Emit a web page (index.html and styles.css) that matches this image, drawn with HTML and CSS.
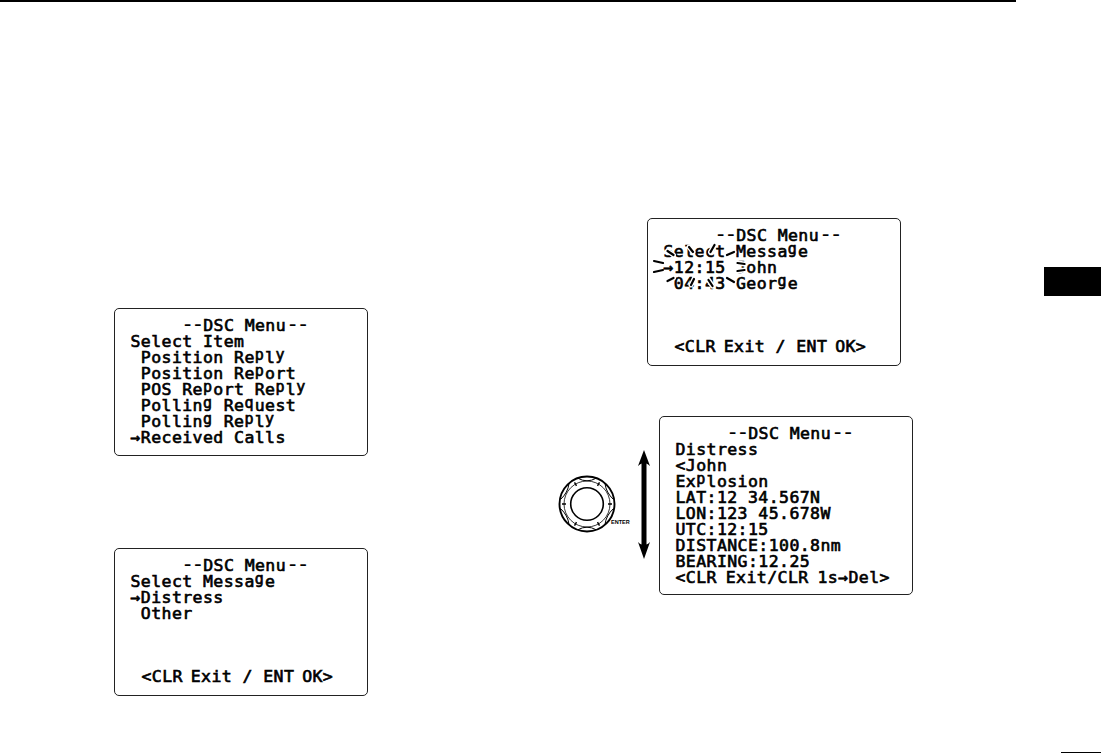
FILE: index.html
```html
<!DOCTYPE html>
<html lang="en">
  <head>
    <meta charset="UTF-8">
    <meta name="viewport" content="width=device-width, initial-scale=1.0">
    <title>DSC Menu</title>
    <link rel="stylesheet" href="styles.css">
  </head>
  <body>
    <div class="page">
      <div class="top-rule"></div>
      <div class="column left">
        <div class="lcd">
          <p class="title"><u>--</u>DSC Menu<u>--</u></p>
          <p>Select Item</p>
          <p> Position Re<i>p</i>l<i>y</i></p>
          <p> Position Re<i>p</i>ort</p>
          <p> POS Re<i>p</i>ort Re<i>p</i>l<i>y</i></p>
          <p> Pollin<i>g</i> Re<i>q</i>uest</p>
          <p> Pollin<i>g</i> Re<i>p</i>l<i>y</i></p>
          <p><b>→</b>Received Calls</p>
        </div>
        <div class="lcd">
          <p class="title"><u>--</u>DSC Menu<u>--</u></p>
          <p>Select Messa<i>g</i>e</p>
          <p><b>→</b>Distress</p>
          <p> Other</p>
          <p class="keys">&lt;CLR Exit<span> / </span>ENT OK&gt;</p>
        </div>
      </div>
      <div class="column right">
        <div class="lcd">
          <p class="title"><u>--</u>DSC Menu<u>--</u></p>
          <p>Select Messa<i>g</i>e</p>
          <p><b>→</b>12:15 John</p>
          <p> 04:43 Geor<i>g</i>e</p>
          <p class="keys">&lt;CLR Exit<span> / </span>ENT OK&gt;</p>
          <svg class="blink" width="100" height="52" viewBox="0 0 100 52">
            <path class="halo" d="M20.500 21l6 4M42 17l4 5M67.500 15l-4 7M80 25l7-3M90.500 33l7 1M90.500 41l7-1M20.500 51l6-3M44 55l3-6M61.500 50l4 6M80 48l7 4"/>
            <path class="rays" d="M7 31l9 2M7 42l9-2M20.500 21l6 4M42 17l4 5M67.500 15l-4 7M80 25l7-3M90.500 33l7 1M90.500 41l7-1M20.500 51l6-3M44 55l3-6M61.500 50l4 6M80 48l7 4"/>
          </svg>
        </div>
        <div class="scroll-row">
          <svg class="knob" width="74" height="60" viewBox="0 0 74 60">
            <circle cx="29" cy="30" r="27.500" stroke-width="1.900"/>
            <path d="M20 4.300q9 5 18 0M20 55.700q9-5 18 0M47 9.500q1 9 8.500 16M47 50.500q1-9 8.500-16M11 9.500q-1 9-8.500 16M11 50.500q-1-9-8.500-16"/>
            <circle cx="29" cy="30" r="23" stroke-width=".8"/>
            <circle cx="29" cy="30" r="16.300" stroke-width="1.600"/>
            <path d="M4 30h4M50 30h4M16.500 8.400l2 3.400M41.500 8.400l-2 3.400M16.500 51.600l2-3.400M41.500 51.600l-2-3.400" stroke-width="1.400"/>
            <text x="53" y="50.300">ENTER</text>
          </svg>
          <svg class="arrow" width="14" height="112" viewBox="0 0 14 112">
            <path d="M7 1L13 17Q11 15 9.500 14.500V95.500Q11 95 13 93L7 110L1 93Q3 95 4.500 95.500V14.500Q3 15 1 17Z"/>
          </svg>
          <div class="lcd tall">
            <p class="title"><u>--</u>DSC Menu<u>--</u></p>
            <p>Distress</p>
            <p>&lt;John</p>
            <p>Ex<i>p</i>losion</p>
            <p>LAT:12 34.567N</p>
            <p>LON:123 45.678W</p>
            <p>UTC:12:15</p>
            <p>DISTANCE:100.8nm</p>
            <p>BEARING:12.25</p>
            <p class="tight">&lt;CLR Exit/CLR 1s<b>→</b>Del&gt;</p>
          </div>
        </div>
      </div>
      <div class="edge">
        <div class="tab"></div>
        <div class="folio"></div>
      </div>
    </div>
  </body>
</html>
```

FILE: styles.css
```css
* { box-sizing: border-box; }
body { margin: 0; background: #fff; color: #000; overflow: hidden; }
.page { width: 1101px; height: 753px; display: grid; grid-template-columns: 558px 486px 57px; grid-template-rows: 2px 751px; }
.top-rule { grid-column: 1 / 4; width: 1016px; background: #000; }

.column { display: flex; flex-direction: column; }
.left { padding: 306px 0 0 114px; gap: 92px; }
.right { padding-top: 216px; gap: 50px; }
.right > .lcd { margin-left: 89px; }

/* radio display */
.lcd { position: relative; width: 254px; height: 148px; padding: 9px 0 0 15.500px; border: 1px solid #222; border-radius: 5px; font-family: "DejaVu Sans Mono", monospace; font-size: 16.500px; line-height: 16px; letter-spacing: 0.420px; -webkit-text-stroke: 0.650px #000; }
.lcd p { margin: 0; height: 16px; white-space: pre; }
.lcd .title { padding-left: 52px; }
/* wide dashes round the title */
.lcd u { text-decoration: none; font-size: 22px; line-height: 0; letter-spacing: -2.890px; -webkit-text-stroke-width: 0; }
.lcd .title u:first-child { margin-left: -1.500px; margin-right: 1.500px; }
/* the display has no room for descenders */
.lcd i { display: inline-block; width: 10.350px; font-style: normal; font-size: 15px; line-height: 0; vertical-align: 3px; }
.lcd b { display: inline-block; width: 10.350px; font-weight: normal; }
.lcd .keys { position: absolute; left: 26.500px; bottom: 10px; word-spacing: -2.500px; }
.keys span { word-spacing: 0; }
.tall { height: 179px; }
.tight { word-spacing: -1.500px; }

.blink { position: absolute; left: -1px; top: 11px; overflow: visible; fill: none; stroke-linecap: round; }
.halo { stroke: #fff; stroke-width: 5; }
.rays { stroke: #000; stroke-width: 2.200; }

.scroll-row { display: flex; align-items: flex-start; }
.knob { margin-top: 58px; fill: none; stroke: #000; }
.knob text { fill: #000; stroke: none; font: bold 5.500px "Liberation Sans", sans-serif; }
.arrow { margin: 33px 0 0 5px; fill: #000; }
.scroll-row .lcd { margin-left: 8px; }

/* right margin of the page */
.edge { display: flex; flex-direction: column; justify-content: space-between; padding-top: 265px; }
.tab { height: 29px; background: #000; }
.folio { width: 40px; height: 1px; margin: 0 0 0 17px; background: #000; }
```
